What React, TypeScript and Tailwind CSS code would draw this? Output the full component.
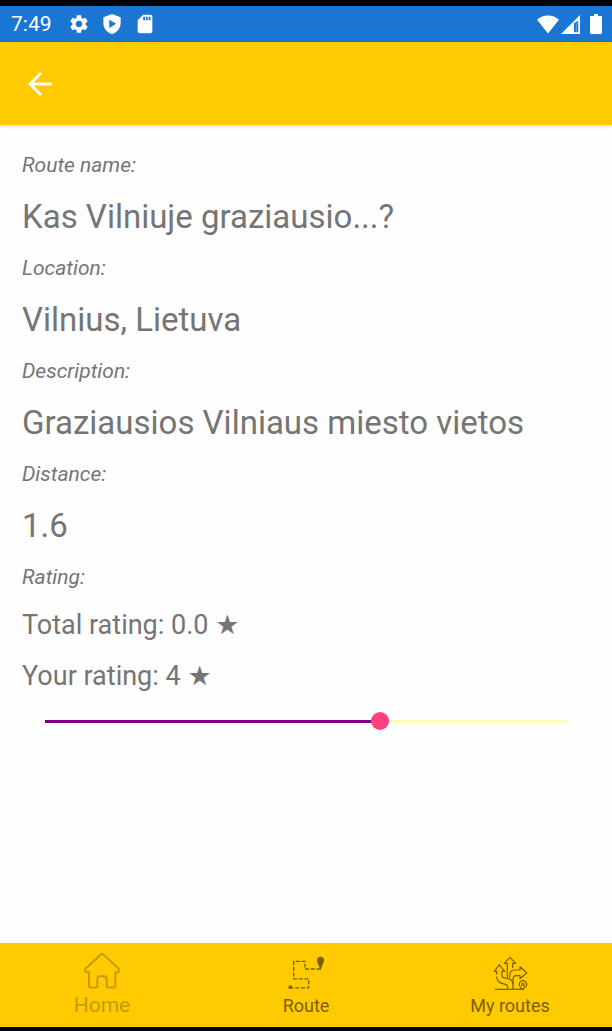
import { useState } from "react";
import { MdArrowBack, MdSdCard, MdSettings } from "react-icons/md";

function ShieldIcon() {
  return (
    <svg viewBox="0 0 24 24" className="size-[22px]" fill="currentColor" aria-hidden="true">
      <path
        fillRule="evenodd"
        d="M12 1 2.6 4.6V11c0 5.6 4 10.700 9.400 12 5.400-1.300 9.400-6.400 9.400-12V4.600L12 1ZM9 7.300v9l7.500-4.500L9 7.300Z"
      />
    </svg>
  );
}

function WifiIcon() {
  return (
    <svg viewBox="0 0 22 19" className="h-[19px] w-[22px]" fill="currentColor" aria-hidden="true">
      <path d="M0 4.800C3 2 6.800.5 11 .5s8 1.500 11 4.300L11 18.500 0 4.800Z" />
    </svg>
  );
}

function SignalIcon() {
  return (
    <svg viewBox="0 0 19 19" className="size-[19px]" fill="currentColor" aria-hidden="true">
      <path fillRule="evenodd" d="M0 19 19 0v19H0ZM13 8v9.300h4.300V6L13 8Z" />
      <path d="M14.800 8h1.200v9.300h-1.200z" opacity="0.3" />
    </svg>
  );
}

function BatteryIcon() {
  return (
    <svg viewBox="0 0 12 20" className="h-5 w-3" fill="currentColor" aria-hidden="true">
      <path d="M4 0h4v2h2.800c.7 0 1.200.5 1.200 1.200v15.600c0 .7-.5 1.200-1.200 1.200H1.200C.5 20 0 19.500 0 18.800V3.200C0 2.500.5 2 1.200 2H4V0Z" />
    </svg>
  );
}

function HomeIcon() {
  return (
    <svg
      viewBox="0 0 36 36"
      className="size-9"
      fill="none"
      stroke="currentColor"
      strokeWidth="2"
      strokeLinejoin="round"
      aria-hidden="true"
    >
      <path d="M16.300 1.900a2.600 2.600 0 0 1 3.600 0l14.500 13.600c1.500 1.600.8 3.800-1.400 3.800h-1.600v13.200c0 1.400-.8 2-2 2h-4.800c-1.300 0-1.900-.7-1.900-1.900V26c0-1.800-1-2.700-2.600-2.700H16c-1.600 0-2.600.9-2.600 2.700v6.600c0 1.200-.6 1.900-1.900 1.900H7c-1.400 0-2-.7-2-2V19.300H3.100c-2.200 0-3.100-2.200-1.400-3.800L16.300 1.900Z" />
    </svg>
  );
}

function RouteIcon() {
  return (
    <svg viewBox="0 0 36 36" className="size-9" fill="none" stroke="currentColor" aria-hidden="true">
      <path
        d="M32.500 16H17V8.300H5.700v17.500h15v9H4"
        strokeWidth="1.300"
        strokeDasharray="4 1.700"
      />
      <circle cx="2.300" cy="34.200" r="1.900" fill="currentColor" stroke="none" />
      <path
        d="M32.500 3.800c2 0 3.600 1.500 3.600 3.400 0 2.800-2.400 5.200-3.100 9.300h-1c-.7-4.100-3-6.500-3-9.300 0-1.900 1.500-3.400 3.500-3.400Z"
        fill="currentColor"
        stroke="none"
      />
    </svg>
  );
}

function MyRoutesIcon() {
  return (
    <svg
      viewBox="0 0 36 37"
      className="h-[37px] w-9"
      fill="none"
      stroke="currentColor"
      strokeWidth="1.200"
      strokeLinejoin="round"
      aria-hidden="true"
    >
      <path d="M3 36.300h29" />
      <path d="M15.300 24.800V10.300h-3L18 4.300l5.700 6h-3v5" />
      <path d="M15.700 36v-2c0-2-1.700-2.800-4.200-3.200-4.500-.8-6.800-3-6.800-7.300M4.700 21.500v-3.200H2.300l5-6.500 5.400 6.500h-2.900v3.200c0 2.200 1 3.300 3.200 3.500 4.500.4 7.300 2 8 5V36" />
      <path d="M17.700 25v-2.500c0-3.400 1.800-5.500 5-5.500H28v-3.200l6.700 5.900-6.700 6v-3h-3.300c-2.500 0-3.700 1.400-3.700 3.800v5" />
      <path d="M31 27.700a3.700 3.700 0 0 1 3.700 3.700c0 2.300-2 3.200-4.700 4.700-.7-1.500-2.700-2.700-2.700-4.700a3.700 3.700 0 0 1 3.700-3.700Z" />
      <circle cx="31" cy="31.300" r="1.300" />
    </svg>
  );
}

const fields = [
  { label: "Route name:", value: "Kas Vilniuje graziausio...?" },
  { label: "Location:", value: "Vilnius, Lietuva" },
  { label: "Description:", value: "Graziausios Vilniaus miesto vietos" },
  { label: "Distance:", value: "1.6" },
];

function trackFill(fraction: number) {
  const stop = `calc(9px + (100% - 18px) * ${fraction})`;
  return `linear-gradient(to right, transparent 9px, #7b0080 9px, #7b0080 ${stop}, #ffffb8 ${stop}, #ffffb8 calc(100% - 9px), transparent calc(100% - 9px)) center / 100% 3px no-repeat`;
}

const labelClass = "text-[21px] leading-[25px] italic";
const ratingClass = "text-[27px] leading-[31px]";

export default function App() {
  const [rating, setRating] = useState(3.21);

  return (
    <div className="flex min-h-screen flex-col border-t-[6px] border-b-4 border-black bg-[#fefefe] font-[Roboto,'DejaVu_Sans',sans-serif] text-[#757575]">
      <div className="flex h-9 items-center bg-[#1a76d2] pr-2.5 pl-[11px] text-white">
        <span className="text-[21px] leading-6">7:49</span>
        <div className="ml-4 flex items-center gap-[11px]">
          <MdSettings className="size-[22px]" aria-hidden="true" />
          <ShieldIcon />
          <MdSdCard className="size-[22px]" aria-hidden="true" />
        </div>
        <div className="ml-auto flex items-center">
          <WifiIcon />
          <span className="ml-0.5">
            <SignalIcon />
          </span>
          <span className="ml-2.5">
            <BatteryIcon />
          </span>
        </div>
      </div>

      <header className="flex h-[83px] items-center bg-[#ffca00] px-[22px] text-white shadow-[0_1px_4px_rgba(0,0,0,0.18)]">
        <button type="button" aria-label="Back">
          <MdArrowBack className="size-9" aria-hidden="true" />
        </button>
      </header>

      <main className="flex grow flex-col gap-5 px-[22px] pt-7">
        <dl className="flex flex-col gap-5">
          {fields.map((field) => (
            <div key={field.label} className="flex flex-col gap-5">
              <dt className={labelClass}>{field.label}</dt>
              <dd className="text-[33px] leading-[38px]">{field.value}</dd>
            </div>
          ))}
        </dl>
        <h2 className={labelClass}>Rating:</h2>
        <p className={ratingClass}>Total rating: 0.0 ★</p>
        <label htmlFor="rating" className={ratingClass}>
          Your rating: {Math.ceil(rating)} ★
        </label>
        <div className="flex px-3.5">
          <input
            id="rating"
            type="range"
            min={0}
            max={5}
            step={0.01}
            value={rating}
            onChange={(event) => setRating(Number(event.target.value))}
            style={{ background: trackFill(rating / 5) }}
            className="h-[18px] w-full appearance-none [&::-webkit-slider-thumb]:size-[18px] [&::-webkit-slider-thumb]:appearance-none [&::-webkit-slider-thumb]:rounded-full [&::-webkit-slider-thumb]:bg-[#ff4081]"
          />
        </div>
      </main>

      <nav className="grid h-[84px] grid-cols-3 bg-[#ffca00]">
        <a href="#home" className="flex flex-col items-center pt-2.5 text-[#c59b07]">
          <HomeIcon />
          <span className="mt-1 text-[21px] leading-[25px]">Home</span>
        </a>
        <a href="#route" className="flex flex-col items-center pt-2.5 text-[#7a6003]">
          <RouteIcon />
          <span className="mt-1.5 text-[18px] leading-[22px]">Route</span>
        </a>
        <a href="#my-routes" className="flex flex-col items-center pt-2.5 text-[#7a6003]">
          <MyRoutesIcon />
          <span className="mt-[5px] text-[18px] leading-[22px]">My routes</span>
        </a>
      </nav>
    </div>
  );
}
